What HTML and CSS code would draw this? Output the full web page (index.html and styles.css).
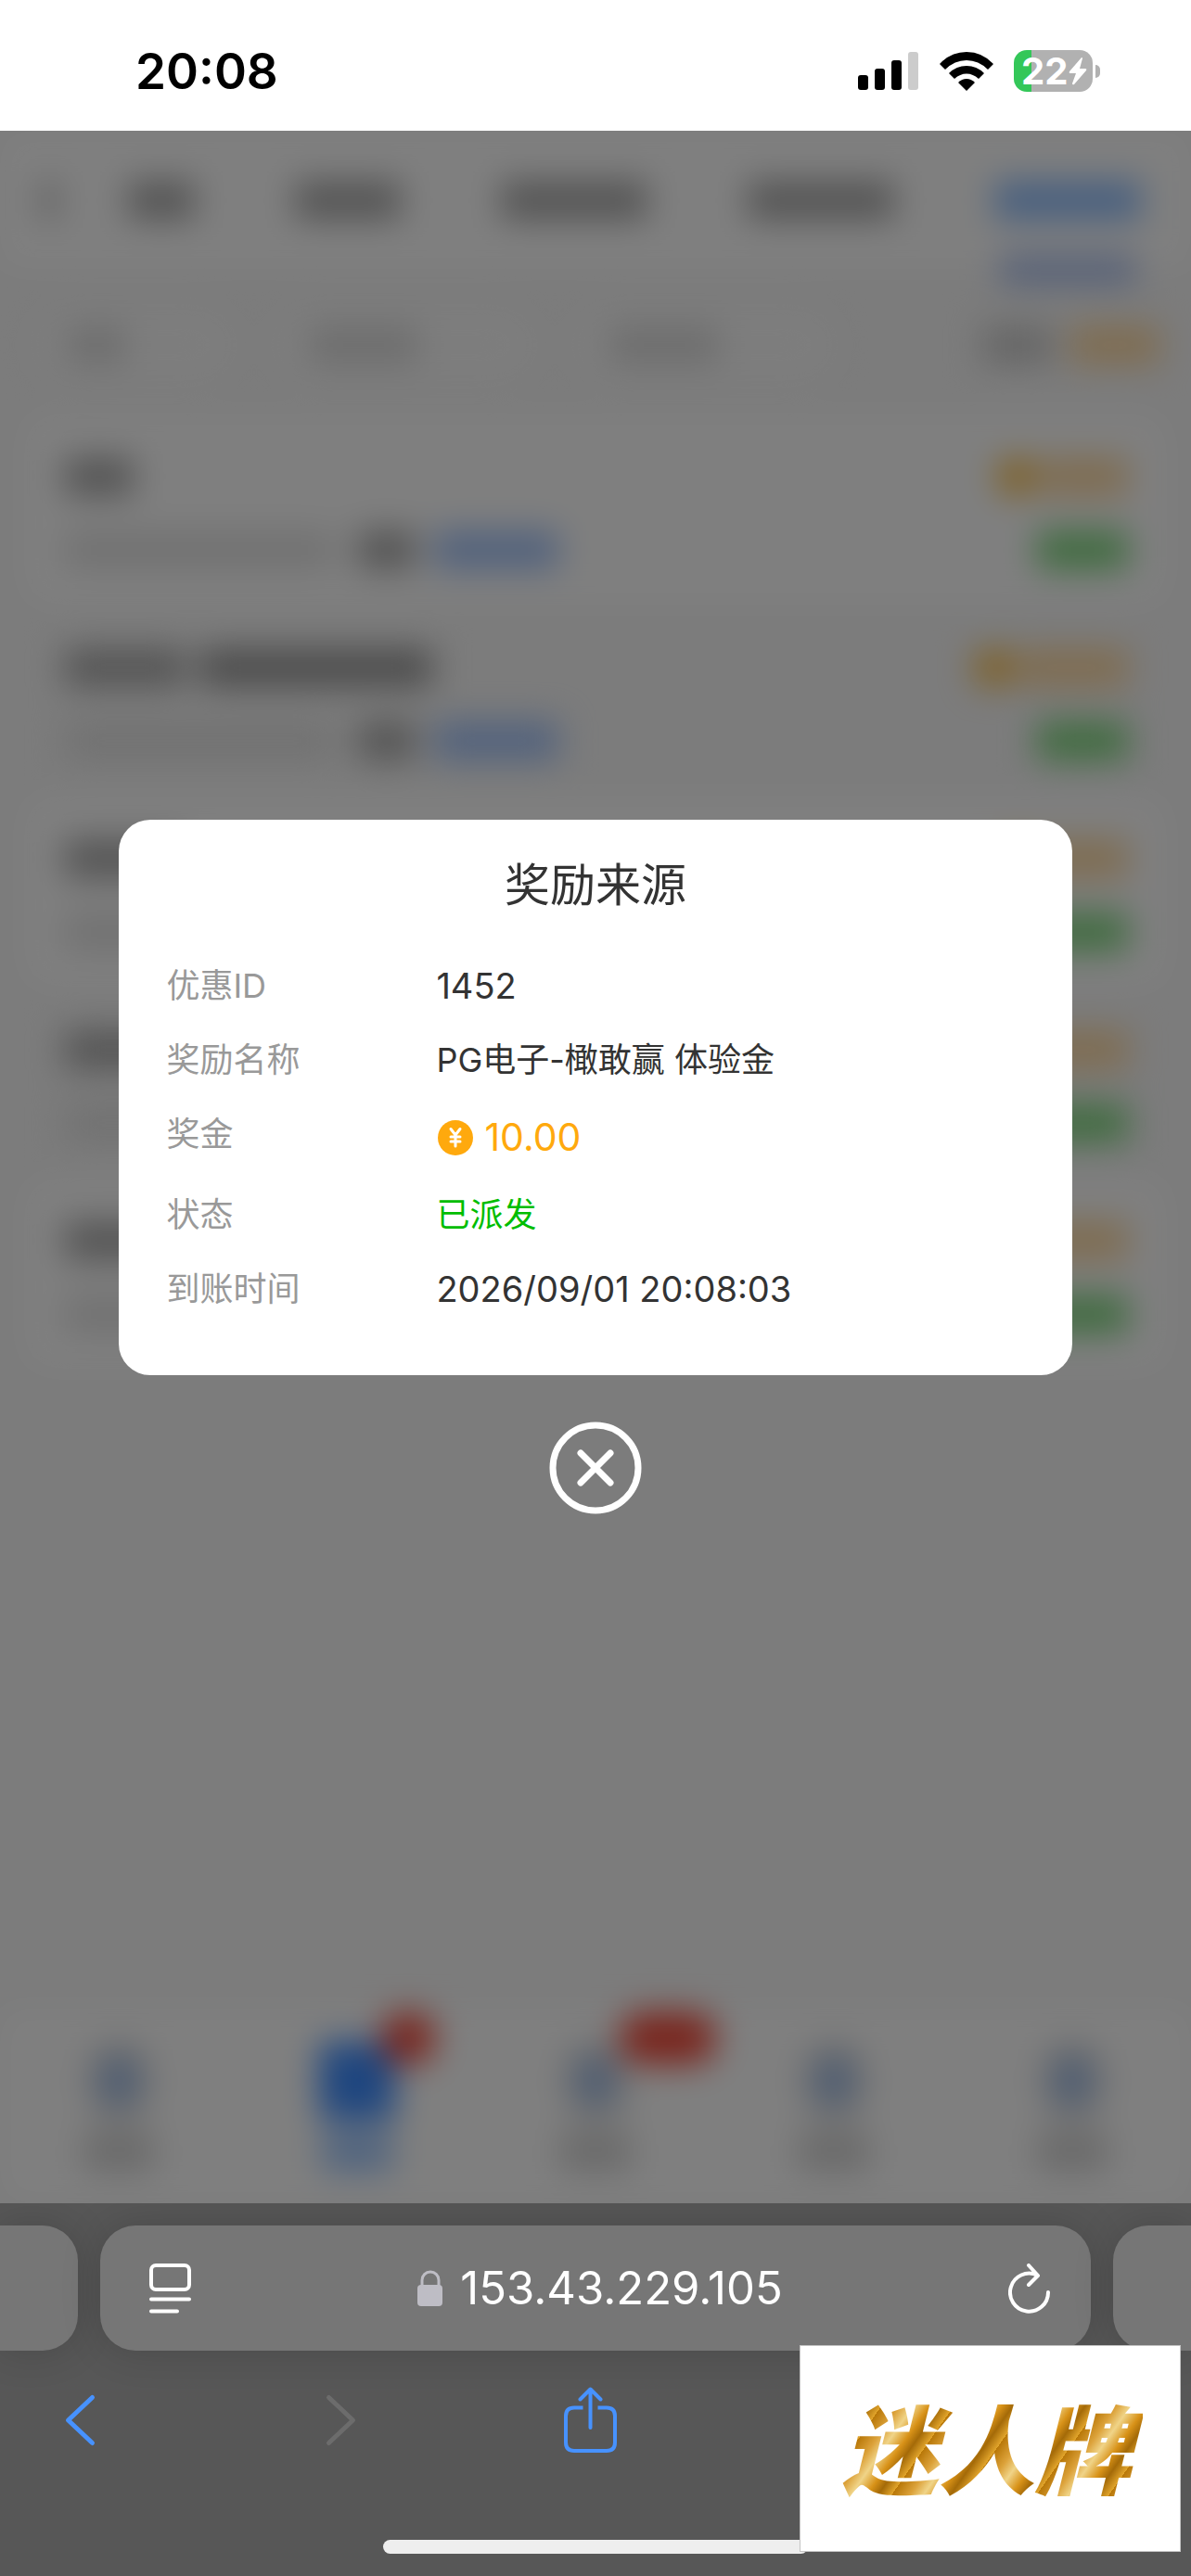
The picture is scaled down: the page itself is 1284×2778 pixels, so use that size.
FILE: index.html
```html
<!DOCTYPE html>
<html lang="zh-CN">
<head>
<meta charset="utf-8">
<meta name="viewport" content="width=device-width, initial-scale=1">
<title>奖励来源</title>
<link rel="stylesheet" href="styles.css">
</head>
<body>
<header class="status">
  <time class="clock">20:08</time>
  <div class="status-icons">
    <svg width="66" height="42" viewBox="0 0 66 42" aria-hidden="true">
      <rect x="0" y="25" width="11" height="16" rx="3"/><rect x="18" y="18" width="11" height="23" rx="3"/><rect x="36" y="9" width="11" height="32" rx="3"/><rect x="54" y="0" width="11" height="41" rx="3" fill="#ccc"/>
    </svg>
    <svg width="58" height="42" viewBox="0 0 58 42" aria-hidden="true">
      <path d="M0 13Q12 0 29 0T58 13L52 19Q42 9 29 9T6 19Z"/>
      <path d="M10 23Q18 15 29 15T48 23L42 29Q36 23.500 29 23.500T16 29Z"/>
      <path d="M20 33Q24 29 29 29T38 33L29 42Z"/>
    </svg>
    <div class="battery"><span class="battery-body">22<svg width="20" height="30" viewBox="0 0 20 30" aria-hidden="true"><path d="M14 0 1 15q-1 2 1 2h6L4 28q0 2 2 1L19 14q1-2-1-2h-6L15 1q0-1-1-1Z" fill="#fff"/></svg></span><span class="battery-tip"></span></div>
  </div>
</header>

<main class="screen">
  <div class="app" aria-hidden="true">
    <div class="tabs">
      <i class="bar back"></i><i class="bar w-s"></i><i class="bar w-m"></i><i class="bar w-l"></i><i class="bar w-l"></i><i class="bar w-l active"></i>
    </div>
    <div class="filters">
      <div class="pill"><i class="bar faint"></i></div><div class="pill wide"><i class="bar faint"></i></div><div class="pill wide"><i class="bar faint"></i></div>
      <div class="total"><i class="bar faint"></i><i class="bar gold"></i></div>
    </div>
    <div class="list">
      <div class="item"><div class="line"><i class="bar t-s"></i><i class="coin"></i><i class="bar gold"></i></div><div class="line"><i class="bar date"></i><i class="bar tag"></i><i class="bar link"></i><i class="bar done"></i></div></div>
      <div class="item"><div class="line"><i class="bar t-m"></i><i class="bar t-l"></i><i class="coin"></i><i class="bar gold long"></i></div><div class="line"><i class="bar date"></i><i class="bar tag"></i><i class="bar link"></i><i class="bar done"></i></div></div>
      <div class="item"><div class="line"><i class="bar t-m"></i><i class="coin"></i><i class="bar gold"></i></div><div class="line"><i class="bar date"></i><i class="bar tag"></i><i class="bar link"></i><i class="bar done"></i></div></div>
      <div class="item"><div class="line"><i class="bar t-m"></i><i class="coin"></i><i class="bar gold"></i></div><div class="line"><i class="bar date"></i><i class="bar tag"></i><i class="bar link"></i><i class="bar done"></i></div></div>
      <div class="item"><div class="line"><i class="bar t-m"></i><i class="coin"></i><i class="bar gold"></i></div><div class="line"><i class="bar date"></i><i class="bar tag"></i><i class="bar link"></i><i class="bar done"></i></div></div>
    </div>
    <div class="nav">
      <div class="nav-item"><i class="glyph"></i><i class="bar"></i></div>
      <div class="nav-item current"><i class="glyph"></i><i class="bar"></i><i class="badge"></i></div>
      <div class="nav-item"><i class="glyph"></i><i class="bar"></i><i class="badge big"></i></div>
      <div class="nav-item"><i class="glyph"></i><i class="bar"></i></div>
      <div class="nav-item"><i class="glyph"></i><i class="bar"></i></div>
    </div>
  </div>

  <div class="mask">
    <section class="dialog" role="dialog" aria-modal="true" aria-labelledby="dialog-title">
      <h1 id="dialog-title">奖励来源</h1>
      <dl>
        <div class="row"><dt>优惠ID</dt><dd class="number">1452</dd></div>
        <div class="row"><dt>奖励名称</dt><dd>PG电子-橄敢赢 体验金</dd></div>
        <div class="row"><dt>奖金</dt><dd class="amount"><svg width="42" height="38" viewBox="0 0 42 38" aria-hidden="true"><circle cx="21" cy="19" r="19" fill="#ffa90d"/><path d="M16 9.500 21 16l5-6.500M21 16v12M16 18h10M16 23h10" fill="none" stroke="#fff" stroke-width="3" stroke-linecap="round"/></svg>10.00</dd></div>
        <div class="row"><dt>状态</dt><dd class="paid">已派发</dd></div>
        <div class="row"><dt>到账时间</dt><dd class="number">2026/09/01 20:08:03</dd></div>
      </dl>
    </section>
    <button class="close" type="button" aria-label="关闭"><svg width="100" height="100" viewBox="0 0 100 100" fill="none" stroke="#fff" stroke-width="7" stroke-linecap="round"><circle cx="50" cy="50" r="46"/><path d="m34 34 32 32M66 34 34 66"/></svg></button>
  </div>
</main>

<footer class="browser">
  <div class="addresses">
    <div class="peek left"></div>
    <div class="address">
      <button class="tool reader" type="button" aria-label="页面菜单"><svg width="46" height="54" viewBox="0 0 46 54" fill="none" stroke="#fff" stroke-width="4" stroke-linecap="round"><rect x="2" y="2" width="41" height="26" rx="5"/><path d="M2 38.500h41M2 51.500h28"/></svg></button>
      <button class="tool url" type="button"><svg width="28" height="40" viewBox="0 0 28 40" aria-hidden="true"><path d="M5 18v-7a9 9 0 0 1 18 0v7" fill="none" stroke="#bebdc5" stroke-width="3"/><rect x="0" y="16" width="27" height="23" rx="4" fill="#bebdc5"/></svg>153.43.229.105</button>
      <button class="tool reload" type="button" aria-label="重新加载"><svg width="46" height="54" viewBox="0 0 46 54" fill="none" stroke="#fff" stroke-width="4" stroke-linecap="round" stroke-linejoin="round"><path d="M43 31A20.500 20.500 0 1 1 31 12.500M22 2l10 11-10 10"/></svg></button>
    </div>
    <div class="peek right"></div>
  </div>
  <nav class="toolbar">
    <div class="history">
      <button class="tool" type="button" aria-label="后退"><svg width="57" height="72" viewBox="0 0 57 72" fill="none" stroke="#4792ff" stroke-width="5" stroke-linecap="round" stroke-linejoin="round"><path d="M41.500 11.500 15.500 36l26 24.500"/></svg></button>
      <button class="tool" type="button" aria-label="前进" disabled><svg width="57" height="72" viewBox="0 0 57 72" fill="none" stroke="#6c6c6c" stroke-width="5" stroke-linecap="round" stroke-linejoin="round"><path d="M15.500 11.500 41.500 36l-26 24.500"/></svg></button>
    </div>
    <button class="tool" type="button" aria-label="分享"><svg width="57" height="72" viewBox="0 0 57 72" fill="none" stroke="#4792ff" stroke-width="4" stroke-linecap="round" stroke-linejoin="round"><path d="M28.500 44V3M17.500 13.500 28.500 2.500l11 11"/><path stroke-linecap="butt" d="M20.500 22.500H11q-9 0-9 9V60q0 9 9 9h35q9 0 9-9V31.500q0-9-9-9h-9.500"/></svg></button>
  </nav>
  <div class="home"></div>
  <div class="brand"><span>迷人牌</span></div>
</footer>
</body>
</html>
```
FILE: styles.css
```css
* { box-sizing: border-box; }

body {
  margin: 0;
  min-height: 100vh;
  display: flex;
  flex-direction: column;
  background: #fff;
  color: #333;
  font-family: Inter, "Noto Sans CJK SC", sans-serif;
  font-size: 36px;
}

svg { display: block; flex: none; }

button {
  padding: 0;
  border: 0;
  background: none;
  color: inherit;
  font: inherit;
}

/* Status bar */
.status {
  height: 141px;
  padding: 12px 98px 0 146px;
  display: flex;
  align-items: center;
  justify-content: space-between;
  color: #000;
}

.clock { font-size: 53px; font-weight: 600; line-height: 60px; }
.status-icons { display: flex; align-items: center; gap: 22px; }
.battery { display: flex; align-items: center; gap: 3px; }

.battery-body {
  width: 85px;
  height: 45px;
  padding-left: 8px;
  display: flex;
  align-items: center;
  gap: 1px;
  border-radius: 14px;
  background: linear-gradient(90deg, #34c759 19px, #b1b1b1 19px);
  color: #fff;
  font-size: 40px;
  font-weight: 700;
}

.battery-tip { width: 5px; height: 14px; border-radius: 0 6px 6px 0; background: #b1b1b1; }

/* Page with the dialog over it */
.screen {
  flex: 1;
  display: grid;
  overflow: hidden;
  background: #f8f8f8;
}

.app, .mask { grid-area: 1 / 1; min-width: 0; }

.app {
  display: flex;
  flex-direction: column;
  filter: blur(18px);
}

.bar { display: block; flex: none; height: 42px; border-radius: 4px; background: #aaa; }

.tabs {
  height: 149px;
  padding: 0 54px 0 46px;
  display: flex;
  align-items: center;
  justify-content: space-between;
  background: #fff;
}

.tabs .back { width: 14px; margin-right: -30px; }
.w-s { width: 72px; }
.w-m { width: 114px; }
.w-l { width: 158px; }
.tabs .active { background: #90bfff; box-shadow: 0 75px 0 -6px #a8bff0; }

.filters {
  height: 156px;
  padding: 8px 34px 0;
  display: flex;
  align-items: center;
  gap: 40px;
}

.pill { width: 220px; height: 76px; padding: 17px 40px; border-radius: 38px; background: #fbfbfb; }
.pill.wide { width: 284px; }
.faint { width: 60px; background: #dcdcdc; }
.wide .faint { width: 116px; }
.total { flex: 1; display: flex; justify-content: flex-end; gap: 20px; }
.total .faint { width: 74px; background: #ccc; }
.gold { width: 96px; background: #ffd9a0; }
.gold.long { width: 120px; }

.list { padding: 0 26px; }

.item {
  height: 206px;
  padding: 48px 42px 0 44px;
  display: flex;
  flex-direction: column;
  gap: 39px;
  border-radius: 24px;
}

.item:nth-child(odd) { background: #fff; }
.line { height: 40px; display: flex; align-items: center; }
.t-s { width: 74px; }
.t-m { width: 130px; }
.t-l { width: 250px; margin-left: 16px; background: #999; }
.coin { width: 42px; height: 42px; margin: 0 4px 0 auto; border-radius: 50%; background: #ffbe40; }
.date { width: 290px; background: #e4e4e4; }
.tag { width: 62px; margin-left: 26px; }
.link { width: 134px; margin-left: 20px; background: #a4c4fa; }
.done { width: 98px; margin-left: auto; background: #80d880; }

.nav {
  height: 210px;
  margin-top: auto;
  padding: 36px 0 0;
  display: flex;
  background: #fff;
}

.nav-item { position: relative; flex: 1; display: flex; flex-direction: column; align-items: center; gap: 12px; }
.glyph { width: 68px; height: 84px; border-radius: 30px; background: radial-gradient(#8fb4ea 20%, #ddd 60%); }
.nav .bar { width: 76px; height: 44px; background: #d4d4d4; }
.current .glyph { width: 82px; border-radius: 8px; background: #3d8cff; }
.nav .current .bar { background: #a0c8ff; }
.badge { position: absolute; top: -32px; left: 60%; width: 58px; height: 56px; border-radius: 26px; background: #f24a3a; }
.badge.big { width: 104px; }

.mask {
  display: flex;
  flex-direction: column;
  align-items: center;
  justify-content: center;
  gap: 50px;
  background: rgba(0, 0, 0, .5);
  z-index: 1;
}

.dialog {
  width: 80%;
  padding: 35px 51px 68px;
  border-radius: 34px;
  background: #fff;
}

h1 {
  margin: 0 0 47px;
  font-size: 49px;
  font-weight: 400;
  line-height: 72px;
  text-align: center;
}

dl { margin: 0; display: grid; gap: 30px; line-height: 50px; }
.row { display: grid; grid-template-columns: 291px 1fr; }
dt { color: #999; }
dd { margin: 0; }
.number { font-size: 38px; }

.amount {
  display: flex;
  align-items: center;
  gap: 10px;
  color: #ffa90d;
  font-size: 41px;
  line-height: 57px;
}

.paid { color: #00bd00; }

/* Browser controls */
.browser {
  position: relative;
  padding: 24px 0;
  overflow: hidden;
  background: #575757;
  color: #fff;
}

.addresses { display: flex; gap: 24px; }

.peek, .address { background: #767676; box-shadow: 0 0 44px rgba(0, 0, 0, .16); }
.peek { width: 84px; }
.peek.left { border-radius: 0 38px 38px 0; }
.peek.right { border-radius: 38px 0 0 38px; }

.address {
  flex: 1;
  height: 135px;
  padding: 0 43px 0 53px;
  display: grid;
  grid-template-columns: 1fr auto 1fr;
  align-items: center;
  border-radius: 38px;
}

.reload { justify-self: end; }
.url { display: flex; align-items: center; gap: 18px; font-size: 49px; line-height: 60px; }
.toolbar { height: 150px; padding-left: 58px; display: flex; align-items: center; gap: 212px; }
.history { display: flex; gap: 224px; }
.home { width: 458px; height: 15px; margin: 54px auto 0; border-radius: 8px; background: #eee; }

.brand {
  position: absolute;
  right: 11px;
  bottom: 26px;
  width: 411px;
  height: 223px;
  padding: 0 8px 8px 0;
  display: flex;
  align-items: center;
  justify-content: center;
  border: 1px solid #c4c4c4;
  background: #fff;
}

.brand span {
  padding: 0 12px;
  background: repeating-linear-gradient(125deg, #b87708 0, #dca23a 16px, #f0d488 28px, #d89218 42px, #a46a08 52px, #e2a52c 64px);
  background-clip: text;
  -webkit-background-clip: text;
  color: transparent;
  font-family: "Noto Sans CJK SC", sans-serif;
  font-size: 104px;
  font-style: italic;
  font-weight: 900;
  line-height: 150px;
}
```
